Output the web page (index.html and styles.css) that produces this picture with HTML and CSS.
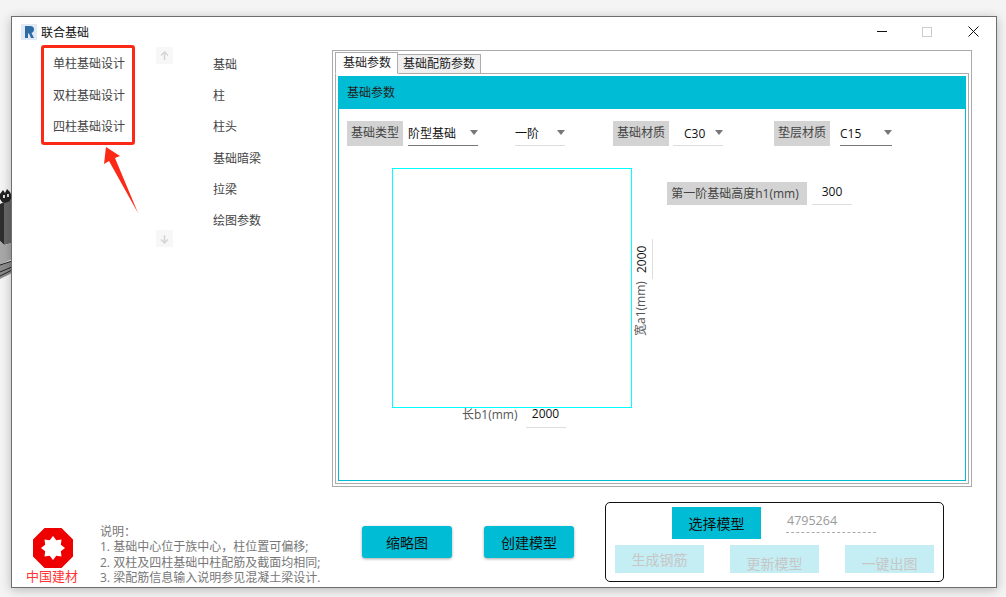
FILE: index.html
```html
<!DOCTYPE html>
<html lang="zh">
<head>
<meta charset="utf-8">
<title>联合基础</title>
<link rel="stylesheet" href="styles.css">
</head>
<body>
<svg class="bg-model" width="12" height="100" viewBox="0 0 12 100"><path d="M4 17L12 15V58L4 60Z" fill="#666"/><path d="M0 19L4 17V60L0 56Z" fill="#2e2e2e"/><path d="M0 56L4 60 12 58V74L0 80Z" fill="#a8a8a8"/><path d="M0 80L12 76V88L0 94Z" fill="#8c8c8c"/><path d="M0 9L3 5 5 8 7 4 10 7 12 12 10 16 5 18 2 17 0 14Z" fill="#222"/><path d="M3 10h2v3H3ZM7 9h2v3H7Z" fill="#ddd"/><path d="M0 80L12 76M0 87L12 82M0 91L12 85" stroke="#222" fill="none"/></svg>
<div class="window">
  <header class="titlebar">
    <svg class="app-icon" width="16" height="16" viewBox="0 0 16 16"><rect width="16" height="16" fill="#e2ebf5"/><path d="M4 2h5c3 0 4 1.500 4 3.500S12 8.500 10.500 9L13 14h-3L8 9.500H7V14H4Z" fill="#2d6da3"/></svg>
    <span class="title">联合基础</span>
    <div class="win-btns">
      <span class="win-min"></span>
      <span class="win-max"></span>
      <svg class="win-close" width="11" height="11" viewBox="0 0 11 11"><path d="M.5.500l10 10M10.500.500l-10 10" stroke="#111" fill="none"/></svg>
    </div>
  </header>
  <div class="main">
    <aside class="sidebar">
      <nav class="menu1">
        <a>单柱基础设计</a>
        <a>双柱基础设计</a>
        <a>四柱基础设计</a>
      </nav>
      <div class="scroller">
        <span class="scroll-btn"><svg width="9" height="10" viewBox="0 0 9 10"><path d="M4.500 9V1M1 4.500 4.500 1 8 4.500" stroke="#d4d4d4" stroke-width="1.500" fill="none"/></svg></span>
        <span class="scroll-btn"><svg width="9" height="10" viewBox="0 0 9 10"><path d="M4.500 1v8M1 5.500 4.500 9 8 5.500" stroke="#d4d4d4" stroke-width="1.500" fill="none"/></svg></span>
      </div>
      <nav class="menu2">
        <a>基础</a>
        <a>柱</a>
        <a>柱头</a>
        <a>基础暗梁</a>
        <a>拉梁</a>
        <a>绘图参数</a>
      </nav>
    </aside>
    <section class="tabs-outer">
      <div class="tabstrip">
        <span class="tab tab-active">基础参数</span>
        <span class="tab">基础配筋参数</span>
      </div>
      <div class="tab-body">
        <div class="card">
          <div class="card-head">基础参数</div>
          <div class="fields">
            <span class="tag tag-1">基础类型</span>
            <span class="select select-type strong">阶型基础<i class="caret"></i></span>
            <span class="select select-step">一阶<i class="caret"></i></span>
            <span class="tag tag-2">基础材质</span>
            <span class="select select-c30">C30<i class="caret"></i></span>
            <span class="tag tag-3">垫层材质</span>
            <span class="select select-c15 strong">C15<i class="caret"></i></span>
          </div>
          <div class="canvas">
            <div class="plan"></div>
            <span class="dim-b"><span class="dim-label">长b1(mm)</span><span class="dim-input">2000</span></span>
            <span class="dim-a"><span class="dim-label">宽a1(mm)</span><span class="dim-input-v">2000</span></span>
            <span class="tag tag-h">第一阶基础高度h1(mm)</span>
            <span class="h-input">300</span>
          </div>
        </div>
      </div>
    </section>
  </div>
  <footer class="footer">
    <div class="logo">
      <svg width="40" height="40" viewBox="0 0 40 40"><path fill-rule="evenodd" d="M11.500 0H28.500L40 11.500V28.500L28.500 40H11.500L0 28.500V11.500ZM20 8L23.250 12.150 28.490 11.510 27.850 16.750 32 20 27.850 23.250 28.490 28.490 23.250 27.850 20 32 16.750 27.850 11.510 28.490 12.150 23.250 8 20 12.150 16.750 11.510 11.510 16.750 12.150Z" fill="#ee0000"/></svg>
      <span class="logo-text">中国建材</span>
    </div>
    <div class="notes">
      <p>说明：</p>
      <p>1. 基础中心位于族中心，柱位置可偏移;</p>
      <p>2. 双柱及四柱基础中柱配筋及截面均相同;</p>
      <p>3. 梁配筋信息输入说明参见混凝土梁设计.</p>
    </div>
    <div class="actions">
      <button class="btn">缩略图</button>
      <button class="btn">创建模型</button>
    </div>
    <div class="model-box">
      <div class="model-row">
        <button class="btn-flat">选择模型</button>
        <span class="model-id">4795264</span>
      </div>
      <div class="model-row2">
        <button class="btn-off off-1">生成钢筋</button>
        <button class="btn-off off-2">更新模型</button>
        <button class="btn-off off-2">一键出图</button>
      </div>
    </div>
  </footer>
</div>
<div class="callout"></div>
<svg class="arrow" width="36" height="70" viewBox="0 0 36 70"><path d="M2 2L16 11 11 13 34 68 5 16 0 19Z" fill="#fb2a17"/></svg>
</body>
</html>
```
FILE: styles.css
```css
* { box-sizing: border-box; }
html, body { margin: 0; height: 100%; }
body {
  position: relative;
  width: 1006px;
  height: 597px;
  overflow: hidden;
  background: #f4f4f4;
  padding: 16px 9px 9px 11px;
  font-family: "Open Sans", "Noto Sans CJK SC", sans-serif;
  font-size: 12px;
  color: #444;
}
.bg-model { position: absolute; left: 0; top: 185px; }
.window {
  position: relative;
  width: 986px;
  height: 572px;
  background: #fff;
  border: 1px solid #6d6d6d;
  box-shadow: 0 2px 10px rgba(0,0,0,.25);
  display: flex;
  flex-direction: column;
}
.titlebar { height: 29px; display: flex; align-items: center; padding: 0 0 0 9px; flex: none; }
.app-icon { flex: none; }
.title { margin-left: 4px; color: #111; }
.win-btns { margin-left: auto; display: flex; align-items: center; }
.win-min { width: 10px; height: 1px; background: #111; margin-right: 35px; }
.win-max { width: 10px; height: 10px; border: 1px solid #ccc; margin-right: 36px; }
.win-close { margin-right: 17px; }
.main { display: flex; flex: 1; min-height: 0; }
.sidebar { width: 320px; flex: none; display: flex; padding: 2px 0 0 30px; }
.menu1 { width: 92px; display: flex; flex-direction: column; }
.menu1 a { height: 31.500px; padding-left: 11px; line-height: 31px; }
.scroller { margin: -1px 0 0 22px; width: 17px; height: 200px; display: flex; flex-direction: column; justify-content: space-between; }
.scroll-btn { width: 17px; height: 17px; background: #f7f7f7; display: flex; align-items: center; justify-content: center; }
.menu2 { margin: 1px 0 0 40px; display: flex; flex-direction: column; }
.menu2 a { height: 31.200px; line-height: 31px; }
.tabs-outer { width: 640px; height: 437px; margin-top: 4px; border: 1px solid #aaa; padding: 1px 2px 2px 2px; display: flex; flex-direction: column; }
.tabstrip { height: 21px; display: flex; align-items: flex-end; position: relative; z-index: 1; flex: none; }
.tab { height: 19px; padding: 0 5px; border: 1px solid #acacac; border-bottom: 0; background: #f0f0f0; line-height: 18px; color: #222; }
.tab-active { height: 22px; background: #fff; border-bottom: 1px solid #fff; margin-bottom: -1px; padding: 0 6px 0 7px; line-height: 19px; }
.tab + .tab { margin-left: -1px; }
.tab-body { flex: 1; border: 1px solid #acacac; padding: 2px; min-height: 0; }
.card { height: 100%; border: 1px solid #00bcd4; border-top: 0; display: flex; flex-direction: column; }
.card-head { height: 33px; background: #00bcd4; color: #222; line-height: 33px; margin: 0 -1px; padding-left: 9px; flex: none; }
.fields { height: 59px; position: relative; flex: none; }
.tag { background: #d3d3d3; color: #444; text-align: center; }
.fields .tag, .fields .select { position: absolute; top: 12px; }
.tag-1 { left: 8px; width: 56px; height: 25px; line-height: 23px; }
.tag-2 { left: 274px; width: 56px; height: 25px; line-height: 23px; }
.tag-3 { left: 435px; width: 56px; height: 25px; line-height: 23px; }
.select { height: 25px; border-bottom: 1px solid #ddd; color: #111; line-height: 26px; }
.select.strong { border-bottom-color: #777; }
.caret { position: absolute; right: 0; top: 9px; width: 0; height: 0; border: 4px solid transparent; border-top: 5px solid #777; border-bottom: 0; }
.select-type { left: 69px; width: 70px; }
.select-step { left: 176px; width: 50px; }
.select-c30 { left: 334px; width: 50px; padding-left: 11px; }
.select-c15 { left: 501px; width: 52px; }
.canvas { position: relative; flex: 1; }
.plan { position: absolute; left: 53px; top: 0; width: 240px; height: 240px; border: 1px solid #0ff; }
.dim-b { position: absolute; left: 123px; top: 237px; display: flex; align-items: flex-start; }
.dim-label { color: #555; white-space: nowrap; }
.dim-input { margin-left: 8px; width: 40px; height: 23px; border-bottom: 1px solid #ddd; text-align: center; color: #111; }
.dim-a { position: absolute; left: 292px; top: 71px; height: 97px; writing-mode: vertical-rl; text-orientation: sideways; transform: rotate(180deg); display: flex; align-items: center; white-space: nowrap; }
.dim-a .dim-label { align-self: flex-start; }
.dim-input-v { margin-top: 2px; height: 40px; width: 22px; border-left: 1px solid #ddd; padding-right: 2px; text-align: center; color: #111; }
.tag-h { position: absolute; left: 328px; top: 14px; width: 140px; height: 23px; line-height: 24px; padding-right: 4px; }
.h-input { position: absolute; left: 473px; top: 12px; width: 40px; height: 25px; border-bottom: 1px solid #ddd; color: #111; text-align: center; line-height: 24px; }
.footer { flex: none; height: 100px; display: flex; position: relative; }
.logo { width: 80px; flex: none; padding: 41px 0 0 21px; display: flex; flex-direction: column; align-items: flex-start; }
.logo-text { color: #f33; font-size: 13px; line-height: 16px; margin: 0 0 0 -7px; white-space: nowrap; }
.notes { width: 260px; flex: none; padding-top: 36.500px; margin-left: 8px; color: #777; line-height: 15.500px; }
.notes p { margin: 0; white-space: nowrap; }
.actions { width: 245px; flex: none; display: flex; gap: 32px; padding: 39px 0 0 2px; }
.btn { width: 90px; height: 32px; border: 0; border-radius: 3px; background: #00bcd4; color: #111; font: inherit; font-size: 14px; box-shadow: 0 1px 3px rgba(0,0,0,.35); }
.model-box { width: 339px; height: 80px; margin-top: 15px; border: 1px solid #111; border-radius: 5px; padding: 4px 9px 0; }
.model-row { display: flex; padding-left: 57px; height: 33px; }
.btn-flat { width: 89px; height: 32px; border: 0; background: #00bcd4; color: #111; font: inherit; font-size: 14px; }
.model-id { margin-left: 25px; width: 90px; height: 26px; border-bottom: 1px dashed #aaa; color: #999; font-size: 12.500px; line-height: 28px; padding-left: 1px; }
.model-row2 { display: flex; justify-content: space-between; padding-top: 5px; }
.btn-off { width: 89px; height: 28px; border: 0; background: #c5eef4; color: #c6c6c6; font: inherit; font-size: 14px; padding: 0; }
.off-2 { padding-top: 8px; }
.callout { position: absolute; left: 41px; top: 45px; width: 94px; height: 100px; border: 3px solid #fb2a17; border-radius: 3px; }
.arrow { position: absolute; left: 104px; top: 145px; }
```
